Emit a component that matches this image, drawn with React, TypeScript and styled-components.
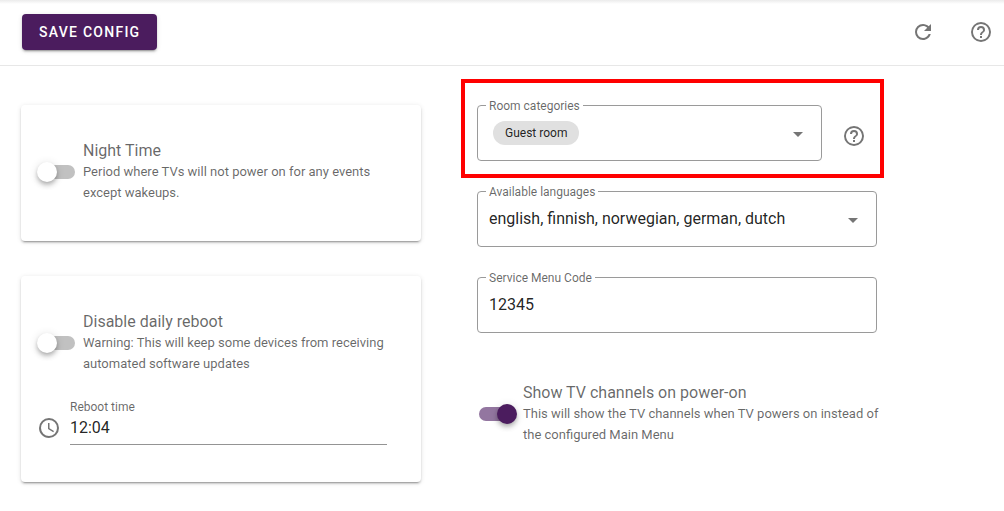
import React, { useState } from "react";
import styled, { createGlobalStyle } from "styled-components";

const purple = "#4b1c5e";
const muted = "rgba(0, 0, 0, 0.6)";
const strong = "rgba(0, 0, 0, 0.87)";

const GlobalStyle = createGlobalStyle`
  *, *::before, *::after { box-sizing: border-box; }
  body {
    margin: 0;
    background: #fff;
    color: ${strong};
    font-family: Roboto, "Liberation Sans", sans-serif;
    font-size: 16px;
    line-height: 24px;
  }
  button, input, select { font: inherit; color: inherit; }
`;

const Toolbar = styled.header`
  display: flex;
  align-items: center;
  justify-content: space-between;
  height: 66px;
  padding: 0 11px 2px 22px;
  border-bottom: 1px solid #e7e7e7;
  background: linear-gradient(#ebebeb, #fff 4px);
`;

const ToolbarActions = styled.div`
  display: flex;
  gap: 34px;
`;

const SaveButton = styled.button`
  height: 36px;
  padding: 0 17px;
  border: 0;
  border-radius: 4px;
  background: ${purple};
  color: #fff;
  font-size: 14px;
  font-weight: 500;
  letter-spacing: 0.09em;
  text-transform: uppercase;
  cursor: pointer;
  box-shadow: 0 3px 1px -2px rgba(0, 0, 0, 0.2), 0 2px 2px rgba(0, 0, 0, 0.14),
    0 1px 5px rgba(0, 0, 0, 0.12);
`;

const IconButton = styled.button`
  display: flex;
  flex: none;
  padding: 0;
  border: 0;
  background: none;
  color: #757575;
  cursor: pointer;
`;

const Content = styled.main`
  display: grid;
  grid-template-columns: minmax(0, 400px) minmax(0, 423px);
  gap: 40px;
  padding: 13px 21px 28px;
`;

const CardColumn = styled.div`
  display: flex;
  flex-direction: column;
  gap: 35px;
  padding-top: 26px;
`;

const Card = styled.section`
  min-height: 136px;
  padding: 35px 16px 37px;
  border-radius: 4px;
  background: #fff;
  box-shadow: 0 3px 1px -2px rgba(0, 0, 0, 0.2), 0 2px 2px rgba(0, 0, 0, 0.14),
    0 1px 5px rgba(0, 0, 0, 0.12);
`;

const SwitchRow = styled.label`
  display: flex;
  align-items: center;
  gap: 6px;
  color: ${muted};
  cursor: pointer;
`;

const SwitchInput = styled.input`
  appearance: none;
  display: grid;
  flex: none;
  align-items: center;
  width: 40px;
  height: 20px;
  margin: 0;
  cursor: pointer;

  &::before,
  &::after {
    content: "";
    grid-area: 1 / 1;
  }
  &::before {
    width: 36px;
    height: 14px;
    margin-left: 2px;
    border-radius: 7px;
    background: #c1c1c1;
  }
  &::after {
    width: 20px;
    height: 20px;
    border-radius: 50%;
    background: #fff;
    box-shadow: 0 2px 4px -1px rgba(0, 0, 0, 0.2), 0 4px 5px rgba(0, 0, 0, 0.14),
      0 1px 10px rgba(0, 0, 0, 0.12);
  }
  &:checked::before {
    background: #9376a0;
  }
  &:checked::after {
    justify-self: end;
    background: ${purple};
  }
`;

const SwitchText = styled.span`
  display: flex;
  flex-direction: column;
  line-height: 21px;
`;

const SwitchHint = styled.span`
  font-size: 13px;
`;

const TimeRow = styled.div`
  display: flex;
  align-items: flex-end;
  gap: 9px;
  padding: 25px 18px 0 0;
  color: #757575;
`;

const TimeIcon = styled.span`
  display: flex;
  padding-bottom: 5px;
`;

const TimeField = styled.div`
  display: flex;
  flex: 1;
  flex-direction: column;
  min-width: 0;
  border-bottom: 1px solid #949494;
`;

const TimeLabel = styled.label`
  color: ${muted};
  font-size: 12px;
  line-height: 16px;
`;

const TimeInput = styled.input`
  width: 100%;
  height: 29px;
  padding: 0 0 5px;
  border: 0;
  outline: 0;
  background: none;
  color: ${strong};
`;

const FieldColumn = styled.div`
  display: flex;
  flex-direction: column;
`;

const Highlight = styled.div`
  display: flex;
  align-items: center;
  gap: 20px;
  padding: 15px 14px 13px 12px;
  border: 4px solid #f00;
`;

const FieldStack = styled.div`
  display: flex;
  flex-direction: column;
  gap: 23px;
  padding: 6px 7px 0 16px;
`;

const SwitchBlock = styled.div`
  padding: 49px 0 0 16px;
`;

const Outline = styled.fieldset`
  flex: 1;
  min-width: 0;
  margin: 0;
  padding: 0 11px 0 8px;
  border: 1px solid #9a9a9a;
  border-radius: 4px;
`;

const OutlineLegend = styled.legend`
  padding: 1px 3px 0;
  color: ${muted};
  font-size: 12px;
  line-height: 14px;
`;

const Control = styled.div`
  display: grid;
  align-items: start;
  height: 47px;
  padding-left: 3px;

  & > * {
    grid-area: 1 / 1;
  }
`;

const TextInput = styled.input`
  width: 100%;
  height: 38px;
  padding: 0;
  border: 0;
  outline: 0;
  background: none;
`;

const Select = styled.select<{ $chip?: boolean }>`
  appearance: none;
  width: 100%;
  height: 40px;
  padding: 0 24px 0 0;
  border: 0;
  outline: 0;
  background: none;
  color: ${(p) => (p.$chip ? "transparent" : strong)};
  cursor: pointer;

  option {
    color: ${strong};
  }
`;

const Arrow = styled.span`
  display: flex;
  justify-self: end;
  margin-top: 9px;
  color: #757575;
  pointer-events: none;
`;

const Chip = styled.span`
  justify-self: start;
  margin: 8px 0 0 4px;
  padding: 0 12px;
  border-radius: 12px;
  background: #e0e0e0;
  font-size: 12px;
  pointer-events: none;
`;

const HelpSpot = styled.div`
  padding-top: 13px;
`;

function Icon({ d }: { d: string }) {
  return (
    <svg width="24" height="24" viewBox="0 0 24 24" fill="currentColor" aria-hidden="true">
      <path d={d} />
    </svg>
  );
}

const icons = {
  refresh:
    "M17.65 6.35C16.2 4.9 14.21 4 12 4A8 8 0 0 0 4 12A8 8 0 0 0 12 20C15.73 20 18.84 17.45 19.73 14H17.65C16.83 16.33 14.61 18 12 18A6 6 0 0 1 6 12A6 6 0 0 1 12 6C13.66 6 15.14 6.69 16.22 7.78L13 11H20V4L17.65 6.35Z",
  help:
    "M11 18H13V16H11V18M12 2A10 10 0 0 0 2 12A10 10 0 0 0 12 22A10 10 0 0 0 22 12A10 10 0 0 0 12 2M12 20C7.59 20 4 16.41 4 12S7.59 4 12 4 20 7.59 20 12 16.41 20 12 20M12 6A4 4 0 0 0 8 10H10A2 2 0 0 1 12 8A2 2 0 0 1 14 10C14 12 11 11.75 11 15H13C13 12.75 16 12.5 16 10A4 4 0 0 0 12 6Z",
  clock:
    "M12 20A8 8 0 0 0 20 12A8 8 0 0 0 12 4A8 8 0 0 0 4 12A8 8 0 0 0 12 20M12 2A10 10 0 0 1 22 12A10 10 0 0 1 12 22C6.47 22 2 17.5 2 12A10 10 0 0 1 12 2M12.5 7V12.25L17 14.92L16.25 16.15L11 13V7H12.5Z",
  menuDown: "M7 10L12 15L17 10H7Z",
};

interface SwitchProps {
  title: string;
  hint: string;
  initial?: boolean;
}

function Switch({ title, hint, initial = false }: SwitchProps) {
  const [on, setOn] = useState(initial);
  return (
    <SwitchRow>
      <SwitchInput type="checkbox" checked={on} onChange={(e) => setOn(e.target.checked)} />
      <SwitchText>
        <span>{title}</span>
        <SwitchHint>{hint}</SwitchHint>
      </SwitchText>
    </SwitchRow>
  );
}

interface FieldProps {
  id: string;
  label: string;
  children: React.ReactNode;
}

function Field({ id, label, children }: FieldProps) {
  return (
    <Outline>
      <OutlineLegend>
        <label htmlFor={id}>{label}</label>
      </OutlineLegend>
      <Control>{children}</Control>
    </Outline>
  );
}

export default function App() {
  return (
    <>
      <GlobalStyle />
      <Toolbar>
        <SaveButton type="button">Save config</SaveButton>
        <ToolbarActions>
          <IconButton type="button" aria-label="Refresh">
            <Icon d={icons.refresh} />
          </IconButton>
          <IconButton type="button" aria-label="Help">
            <Icon d={icons.help} />
          </IconButton>
        </ToolbarActions>
      </Toolbar>
      <Content>
        <CardColumn>
          <Card>
            <Switch
              title="Night Time"
              hint="Period where TVs will not power on for any events except wakeups."
            />
          </Card>
          <Card>
            <Switch
              title="Disable daily reboot"
              hint="Warning: This will keep some devices from receiving automated software updates"
            />
            <TimeRow>
              <TimeIcon>
                <Icon d={icons.clock} />
              </TimeIcon>
              <TimeField>
                <TimeLabel htmlFor="reboot-time">Reboot time</TimeLabel>
                <TimeInput id="reboot-time" type="text" defaultValue="12:04" />
              </TimeField>
            </TimeRow>
          </Card>
        </CardColumn>
        <FieldColumn>
          <Highlight>
            <Field id="room-categories" label="Room categories">
              <Select id="room-categories" $chip>
                <option>Guest room</option>
              </Select>
              <Chip aria-hidden="true">Guest room</Chip>
              <Arrow>
                <Icon d={icons.menuDown} />
              </Arrow>
            </Field>
            <HelpSpot>
              <IconButton type="button" aria-label="About room categories">
                <Icon d={icons.help} />
              </IconButton>
            </HelpSpot>
          </Highlight>
          <FieldStack>
            <Field id="languages" label="Available languages">
              <Select id="languages">
                <option>english, finnish, norwegian, german, dutch</option>
              </Select>
              <Arrow>
                <Icon d={icons.menuDown} />
              </Arrow>
            </Field>
            <Field id="service-code" label="Service Menu Code">
              <TextInput id="service-code" type="text" defaultValue="12345" />
            </Field>
          </FieldStack>
          <SwitchBlock>
            <Switch
              title="Show TV channels on power-on"
              hint="This will show the TV channels when TV powers on instead of the configured Main Menu"
              initial
            />
          </SwitchBlock>
        </FieldColumn>
      </Content>
    </>
  );
}
